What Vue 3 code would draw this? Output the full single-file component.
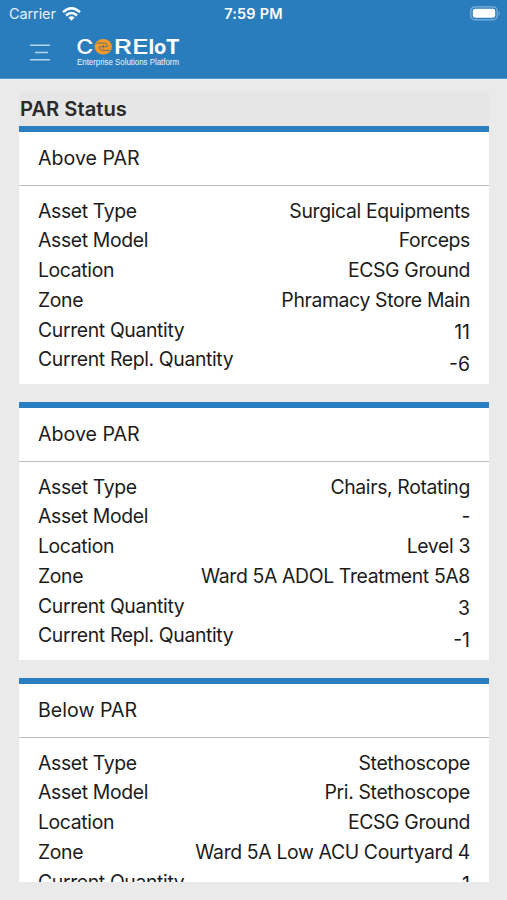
<script setup>
import { ref } from 'vue'

const cards = ref([
    {
        status: 'Above PAR',
        rows: [
            ['Asset Type', 'Surgical Equipments'],
            ['Asset Model', 'Forceps'],
            ['Location', 'ECSG Ground'],
            ['Zone', 'Phramacy Store Main'],
            ['Current Quantity', 11],
            ['Current Repl. Quantity', -6],
        ],
    },
    {
        status: 'Above PAR',
        rows: [
            ['Asset Type', 'Chairs, Rotating'],
            ['Asset Model', '-'],
            ['Location', 'Level 3'],
            ['Zone', 'Ward 5A ADOL Treatment 5A8'],
            ['Current Quantity', 3],
            ['Current Repl. Quantity', -1],
        ],
    },
    {
        status: 'Below PAR',
        rows: [
            ['Asset Type', 'Stethoscope'],
            ['Asset Model', 'Pri. Stethoscope'],
            ['Location', 'ECSG Ground'],
            ['Zone', 'Ward 5A Low ACU Courtyard 4'],
            ['Current Quantity', 1],
        ],
    },
])

const isNumber = (value) => typeof value === 'number'
</script>

<template>
    <div class="screen">
        <header class="top">
            <div class="statusbar">
                <div class="carrier">
                    <span>Carrier</span>
                    <svg class="wifi" width="19" height="14" viewBox="0 0 19 14">
                        <g fill="none" stroke="#fff" stroke-width="2.5">
                            <path d="M1 5.2 Q9.5 -2.6 18 5.2" />
                            <path d="M4 8.5 Q9.5 3.4 15 8.5" />
                        </g>
                        <path d="M6.4 10.6 Q9.5 7.9 12.6 10.6 L9.5 13.8 Z" fill="#fff" />
                    </svg>
                </div>
                <div class="time">7:59 PM</div>
                <div class="battery">
                    <svg width="31" height="15" viewBox="0 0 31 15">
                        <rect x="0.8" y="0.8" width="26.4" height="13" rx="4" fill="none" stroke="#7fb2dc" stroke-width="1.2" />
                        <rect x="2.8" y="2.8" width="22.4" height="9" rx="2.2" fill="#fff" />
                        <path d="M28.7 5 Q31 7.3 28.7 9.6 Z" fill="#7fb2dc" />
                    </svg>
                </div>
            </div>
            <div class="navbar">
                <svg class="menu" width="20" height="17" viewBox="0 0 20 17">
                    <path d="M0 1.3 H20 M5 8.5 H18 M0 15.7 H20" stroke="#b5d5ee" stroke-width="1.6" />
                </svg>
                <svg class="logo" width="108" height="32" viewBox="0 -2 108 32">
                    <g class="brand" fill="#fff">
                        <text x="-0.8" y="16" textLength="17" lengthAdjust="spacingAndGlyphs">C</text>
                        <text x="36.5" y="16" textLength="18.5" lengthAdjust="spacingAndGlyphs">R</text>
                        <text x="55" y="16" textLength="17" lengthAdjust="spacingAndGlyphs">E</text>
                        <g class="bold">
                            <text x="71.6" y="16">I</text>
                            <text x="77" y="16">o</text>
                            <text x="88.7" y="16" textLength="14" lengthAdjust="spacingAndGlyphs">T</text>
                        </g>
                    </g>
                    <ellipse cx="26.3" cy="8.7" rx="8.6" ry="7.7" fill="#f3992b" />
                    <g fill="none" stroke="#6b7268" stroke-width="1">
                        <path d="M19.5 5 H27.5 Q30.3 5 30.3 8.7 H26.3" />
                        <path d="M33.1 12.4 H25.1 Q22.3 12.4 22.3 8.7 H26.3" />
                        <path d="M26.3 6.8 V10.6" />
                    </g>
                    <text class="tagline" x="0" y="26.5" textLength="102" lengthAdjust="spacingAndGlyphs" fill="#eef6fc">Enterprise Solutions Platform</text>
                </svg>
            </div>
        </header>

        <main class="list">
            <h1 class="title">PAR Status</h1>
            <section v-for="(card, i) in cards" :key="i" class="card">
                <div class="card-head">{{ card.status }}</div>
                <div class="card-body">
                    <div class="labels">
                        <div v-for="row in card.rows" :key="row[0]" class="cell">{{ row[0] }}</div>
                    </div>
                    <div class="values">
                        <div v-for="row in card.rows" :key="row[0]" class="cell" :class="{ number: isNumber(row[1]) }">{{ row[1] }}</div>
                    </div>
                </div>
            </section>
        </main>
    </div>
</template>

<style>
body {
    margin: 0;
    background: #eaeaea;
}
</style>

<style scoped>
.screen {
    width: 100%;
    height: 900px;
    display: flex;
    flex-direction: column;
    overflow: hidden;
    background: #eaeaea;
    color: #1c1c1c;
    font-family: Inter, "Liberation Sans", sans-serif;
}

.top {
    flex: none;
    height: 79px;
    box-sizing: border-box;
    background: #297dbd;
    border-bottom: 1px solid #4f9bd3;
    color: #fff;
}

.statusbar {
    height: 27px;
    display: grid;
    grid-template-columns: 1fr auto 1fr;
    align-items: center;
    padding: 0 6px 0 9px;
    font-size: 14.5px;
}

.carrier {
    display: flex;
    align-items: center;
    gap: 6px;
    color: #e6f1fa;
    letter-spacing: -0.1px;
}

.time {
    margin-right: 3px;
    font-size: 14.5px;
    font-weight: 600;
    letter-spacing: 0.2px;
}

.battery {
    display: flex;
    justify-content: flex-end;
}

.navbar {
    display: flex;
    align-items: flex-start;
    padding: 9px 0 0 30px;
}

.menu {
    margin-top: 8px;
}

.logo {
    margin-left: 27px;
    overflow: visible;
}

.brand {
    font-size: 20px;
    font-weight: 500;
}

.bold {
    font-weight: 700;
}

.tagline {
    font-family: "Liberation Sans", sans-serif;
    font-size: 8.3px;
}

.list {
    flex: none;
    height: 789.5px;
    margin: 13px 18px 0 19px;
    overflow: hidden;
}

.title {
    height: 33.5px;
    margin: 0;
    padding-left: 1px;
    background: #e6e6e6;
    color: #2a2a2a;
    font-size: 20.2px;
    font-weight: 600;
    line-height: 34px;
}

.card {
    height: 258px;
    box-sizing: border-box;
    margin-bottom: 18px;
    border-top: 6px solid #2b7fc1;
    background: #fff;
    font-size: 19.6px;
}

.card-head {
    height: 54.5px;
    box-sizing: border-box;
    padding-left: 19px;
    border-bottom: 1px solid #bdbdbd;
    line-height: 53px;
}

.card-body {
    display: flex;
    justify-content: space-between;
    padding: 10.7px 19px 0;
    font-size: 19.4px;
    letter-spacing: -0.36px;
}

/* long values reach into the space beside the short labels */
.labels {
    flex: none;
    width: 150px;
}

.cell {
    height: 29.75px;
    line-height: 29.75px;
    white-space: nowrap;
}

.values {
    text-align: right;
}

.number {
    height: 32px;
    line-height: 33px;
    letter-spacing: 0;
}
</style>
